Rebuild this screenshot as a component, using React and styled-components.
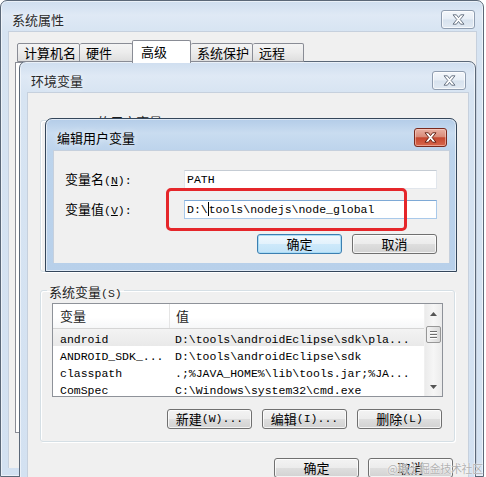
import React from "react";
import styled, { createGlobalStyle, css } from "styled-components";

const Global = createGlobalStyle`
  html, body { margin: 0; padding: 0; background: #ffffff; }
  body { font-family: "Noto Sans CJK SC", sans-serif; color: #000; }
  * { box-sizing: border-box; }
`;

const HAN_SPLIT = /([\u2E80-\u9FFF\uFF00-\uFFEF\u3000-\u303F]+)/;
const HAN_TEST = /[\u2E80-\u9FFF\uFF00-\uFFEF\u3000-\u303F]/;

const Han = styled.span`
  font-family: "Noto Sans CJK SC", sans-serif;
  font-size: 13px;
`;
const Lat = styled.span`
  font-family: "Liberation Mono", monospace;
  font-size: 11.5px;
`;
const Key = styled(Lat)`
  text-decoration: underline;
  text-underline-offset: 1px;
`;

function Txt({ children }) {
  return String(children)
    .split(HAN_SPLIT)
    .filter(Boolean)
    .map((part, i) =>
      HAN_TEST.test(part) ? <Han key={i}>{part}</Han> : <Lat key={i}>{part}</Lat>
    );
}

const Stage = styled.div`
  position: relative;
  width: 486px;
  height: 477px;
  overflow: hidden;
  background: #ffffff;
`;

const Window = styled.div`
  position: absolute;
  left: ${(p) => p.$x}px;
  top: ${(p) => p.$y}px;
  width: ${(p) => p.$w}px;
  height: ${(p) => p.$h}px;
  display: flex;
  flex-direction: column;
  border: 1px solid ${(p) => (p.$active ? "#34465a" : "#5b6878")};
  border-radius: 7px 7px 0 0;
  background: ${(p) =>
    p.$active
      ? "linear-gradient(180deg, #b3cce8 0px, #c9dcf0 14px, #bdd4ec 31px, #b8d0ea 100%)"
      : "linear-gradient(180deg, #cfdeef 0px, #dfe9f5 14px, #d7e4f2 31px, #d3e1f1 100%)"};
  box-shadow: inset 0 0 0 1px rgba(255, 255, 255, 0.55);
`;

const TitleBar = styled.div`
  height: ${(p) => p.$h || 30}px;
  flex: none;
  display: flex;
  justify-content: space-between;
  align-items: flex-start;
  padding: 9px ${(p) => p.$pr || 9}px 0 11px;
`;

const Title = styled.div`
  margin-top: 2px;
  line-height: 16px;
  font-size: 13px;
  font-family: "Noto Sans CJK SC", sans-serif;
  color: ${(p) => (p.$active ? "#000" : "#2a2a2a")};
  text-shadow: 0 0 6px rgba(255, 255, 255, 0.9);
`;

const CloseButton = styled.div`
  width: ${(p) => p.$w || 33}px;
  height: 19px;
  border-radius: 3px;
  display: flex;
  align-items: center;
  justify-content: center;
  ${(p) =>
    p.$red
      ? css`
          border: 1px solid #7a2a1e;
          background: linear-gradient(180deg, #e9b1a3 0%, #d98c7a 45%, #c5472f 52%, #d8674c 100%);
          box-shadow: inset 0 0 0 1px rgba(255, 220, 210, 0.5);
        `
      : css`
          border: 1px solid #8f9db0;
          background: linear-gradient(180deg, #f4f7fb 0%, #e7eef6 48%, #d7e2ee 52%, #e2eaf3 100%);
          box-shadow: inset 0 0 0 1px rgba(255, 255, 255, 0.7);
        `}
`;

function Close({ red, w }) {
  return (
    <CloseButton $red={red} $w={w}>
      <svg width="13" height="11" viewBox="0 0 13 11">
        <path
          d="M1 0.8 H4.4 L6.5 3.6 L8.6 0.8 H12 L8.2 5.5 L12 10.2 H8.6 L6.5 7.4 L4.4 10.2 H1 L4.8 5.5 Z"
          fill="#ffffff"
          stroke={red ? "#5a1508" : "#5d6a7a"}
          strokeWidth="0.9"
          strokeLinejoin="round"
        />
      </svg>
    </CloseButton>
  );
}

const Client = styled.div`
  position: relative;
  flex: 1;
  margin: 0 6px 8px 7px;
  background: #f0f0f0;
  border: 1px solid rgba(120, 150, 185, 0.35);
  border-bottom: none;
  display: flex;
  flex-direction: column;
  padding: ${(p) => p.$pad || "0"};
`;

const TabStrip = styled.div`
  display: flex;
  align-items: flex-end;
  height: 22px;
  margin-left: 2px;
  position: relative;
  z-index: 1;
`;

const Tab = styled.div`
  width: ${(p) => p.$w}px;
  height: ${(p) => (p.$sel ? 23 : 19)}px;
  margin-bottom: ${(p) => (p.$sel ? -1 : 0)}px;
  padding-left: ${(p) => (p.$sel ? 8 : 6)}px;
  display: flex;
  align-items: center;
  font-size: 13px;
  line-height: 16px;
  border: 1px solid #898c95;
  border-bottom: ${(p) => (p.$sel ? "none" : "1px solid #898c95")};
  border-left-width: ${(p) => (p.$first || p.$sel ? 1 : 0)}px;
  border-radius: 2px 2px 0 0;
  background: ${(p) =>
    p.$sel ? "#ffffff" : "linear-gradient(180deg, #f4f4f4 0%, #ececec 50%, #dedede 100%)"};
  ${(p) => p.$sel && "margin-left: -1px;"}
`;

const TabPanel = styled.div`
  height: 371px;
  margin-right: 7px;
  border: 1px solid #898c95;
  background: #ffffff;
`;

const EnvBody = styled.div`
  display: flex;
  flex-direction: column;
  padding: 19px 13px 0 12px;
`;

const Group = styled.fieldset`
  margin: ${(p) => (p.$mt ? `${p.$mt}px` : 0)} 0 0 0;
  padding: 5px 11px 12px 11px;
  border: 1px solid #d5dfe5;
  border-radius: 3px;
  min-width: 0;
  box-shadow: inset 1px 1px 0 #ffffff, 1px 1px 0 #ffffff;
`;

const Legend = styled.legend`
  padding: 0 2px;
  margin-left: -5px;
  height: 16px;
  line-height: 16px;
  color: #1e1e1e;
`;

const ListView = styled.div`
  height: 94px;
  display: flex;
  border: 1px solid #8e9299;
  background: #ffffff;
  overflow: hidden;
`;

const ListMain = styled.div`
  flex: 1;
  min-width: 0;
  display: flex;
  flex-direction: column;
`;

const HeaderRow = styled.div`
  height: 25px;
  flex: none;
  display: flex;
  align-items: stretch;
  background: linear-gradient(180deg, #ffffff 0%, #ffffff 55%, #f6f7f8 100%);
  border-bottom: 1px solid #d5d5d5;
`;

const HeaderCell = styled.div`
  width: ${(p) => (p.$w ? `${p.$w}px` : "auto")};
  flex: ${(p) => (p.$w ? "none" : 1)};
  display: flex;
  align-items: center;
  padding-left: ${(p) => p.$pl}px;
  line-height: 16px;
  color: #1e1e1e;
  border-right: ${(p) => (p.$w ? "1px solid #e5e5e5" : "none")};
`;

const Row = styled.div`
  height: 17px;
  flex: none;
  display: flex;
  align-items: center;
  line-height: 17px;
  white-space: nowrap;
  background: ${(p) => (p.$hl ? "linear-gradient(180deg, #f3f3f3, #e9e9e9)" : "transparent")};
`;

const Cell = styled.div`
  width: ${(p) => (p.$w ? `${p.$w}px` : "auto")};
  flex: ${(p) => (p.$w ? "none" : 1)};
  padding-left: ${(p) => p.$pl}px;
  overflow: hidden;
`;

const ScrollBar = styled.div`
  width: 18px;
  flex: none;
  display: flex;
  flex-direction: column;
  background: linear-gradient(90deg, #ebebeb 0%, #f6f6f6 50%, #ebebeb 100%);
  border-left: 1px solid #f0f0f0;
`;

const ScrollArrow = styled.div`
  height: 19px;
  flex: none;
  display: flex;
  align-items: center;
  justify-content: center;
`;

const ScrollTrack = styled.div`
  flex: 1;
  display: flex;
  flex-direction: column;
  padding: 3px 1px 0 1px;
`;

const Thumb = styled.div`
  height: 17px;
  border: 1px solid #979797;
  border-radius: 2px;
  background: linear-gradient(90deg, #f3f3f3 0%, #e6e6e6 50%, #d9d9d9 100%);
  display: flex;
  flex-direction: column;
  align-items: center;
  justify-content: center;
  gap: 2px;
`;

const Grip = styled.div`
  width: 7px;
  height: 1px;
  background: #6f6f6f;
  box-shadow: 0 1px 0 #ffffff;
`;

function Scroll() {
  return (
    <ScrollBar>
      <ScrollArrow>
        <svg width="7" height="4" viewBox="0 0 7 4">
          <path d="M0 4 L3.5 0 L7 4 Z" fill="#555" />
        </svg>
      </ScrollArrow>
      <ScrollTrack>
        <Thumb>
          <Grip />
          <Grip />
          <Grip />
        </Thumb>
      </ScrollTrack>
      <ScrollArrow>
        <svg width="7" height="4" viewBox="0 0 7 4">
          <path d="M0 0 L7 0 L3.5 4 Z" fill="#555" />
        </svg>
      </ScrollArrow>
    </ScrollBar>
  );
}

function VarList({ rows }) {
  return (
    <ListView>
      <ListMain>
        <HeaderRow>
          <HeaderCell $w={117} $pl={7}>
            <Txt>变量</Txt>
          </HeaderCell>
          <HeaderCell $pl={6}>
            <Txt>值</Txt>
          </HeaderCell>
        </HeaderRow>
        {rows.map(([name, value], i) => (
          <Row key={name} $hl={i === 0}>
            <Cell $w={117} $pl={7}>
              <Txt>{name}</Txt>
            </Cell>
            <Cell $pl={5}>
              <Txt>{value}</Txt>
            </Cell>
          </Row>
        ))}
      </ListMain>
      <Scroll />
    </ListView>
  );
}

const ButtonRow = styled.div`
  display: flex;
  justify-content: flex-end;
  gap: ${(p) => p.$gap || 10}px;
  margin-top: ${(p) => p.$mt || 0}px;
  padding-right: ${(p) => p.$pr || 0}px;
`;

const Button = styled.div`
  width: 85px;
  height: 20px;
  display: flex;
  align-items: center;
  justify-content: center;
  line-height: 18px;
  border-radius: 3px;
  white-space: nowrap;
  ${(p) =>
    p.$default
      ? css`
          border: 1px solid #3c7fb1;
          background: linear-gradient(180deg, #f0f8fd 0%, #e3f2fc 48%, #cde9fa 52%, #c2e3f8 100%);
          box-shadow: inset 0 0 0 1px #a9dcf6;
        `
      : css`
          border: 1px solid #707070;
          background: linear-gradient(180deg, #f3f3f3 0%, #ececec 48%, #dedede 52%, #d2d2d2 100%);
          box-shadow: inset 0 0 0 1px rgba(255, 255, 255, 0.75);
        `}
`;

const FieldRow = styled.div`
  display: flex;
  align-items: center;
  margin-top: ${(p) => p.$mt || 0}px;
`;

const FieldLabel = styled.div`
  width: 119px;
  flex: none;
  line-height: 16px;
  white-space: nowrap;
`;

const TextBox = styled.div`
  width: 253px;
  height: 19px;
  display: flex;
  align-items: center;
  padding-left: 2px;
  background: #ffffff;
  white-space: nowrap;
  overflow: hidden;
  border: 1px solid ${(p) => (p.$focus ? "#a9c9ea" : "#e1e6ec")};
  border-top-color: ${(p) => (p.$focus ? "#7ea9d6" : "#c5ccd4")};
`;

const BoxText = styled.span`
  font-family: "Liberation Mono", monospace;
  font-size: 11.5px;
  line-height: 15px;
`;

const Caret = styled.span`
  width: 1px;
  height: 14px;
  flex: none;
  background: #000;
`;

const Annotation = styled.div`
  position: absolute;
  left: 112px;
  top: 37px;
  width: 241px;
  height: 43px;
  border: 3px solid #e5262a;
  border-radius: 5px;
  pointer-events: none;
`;

const Watermark = styled.div`
  position: absolute;
  right: 3px;
  bottom: 2px;
  font-size: 11px;
  line-height: 14px;
  letter-spacing: -0.3px;
  color: #b2b2b2;
  text-shadow: 0 0 1px #ffffff, 0 0 2px rgba(255, 255, 255, 0.8);
  font-family: "Noto Sans CJK SC", sans-serif;
`;

const tabs = [
  { label: "计算机名", w: 63 },
  { label: "硬件", w: 53 },
  { label: "高级", w: 59, sel: true },
  { label: "系统保护", w: 62 },
  { label: "远程", w: 51 },
];

const userVars = [
  ["PATH", "D:\\tools\\nodejs\\node_global"],
  ["TEMP", "%USERPROFILE%\\AppData\\Local\\Temp"],
  ["TMP", "%USERPROFILE%\\AppData\\Local\\Temp"],
];

const sysVars = [
  ["android", "D:\\tools\\androidEclipse\\sdk\\pla..."],
  ["ANDROID_SDK_...", "D:\\tools\\androidEclipse\\sdk"],
  ["classpath", ".;%JAVA_HOME%\\lib\\tools.jar;%JA..."],
  ["ComSpec", "C:\\Windows\\system32\\cmd.exe"],
];

export default function App() {
  return (
    <Stage>
      <Global />
      <Window $x={0} $y={0} $w={484} $h={477}>
        <TitleBar $pr={8}>
          <Title>系统属性</Title>
          <Close w={34} />
        </TitleBar>
        <Client $pad="8px 0 0 6px">
          <TabStrip>
            {tabs.map((t, i) => (
              <Tab key={t.label} $w={t.w} $sel={t.sel} $first={i === 0}>
                {t.label}
              </Tab>
            ))}
          </TabStrip>
          <TabPanel />
        </Client>
      </Window>

      <Window $x={19} $y={61} $w={457} $h={430}>
        <TitleBar>
          <Title>环境变量</Title>
          <Close w={34} />
        </TitleBar>
        <Client>
          <EnvBody>
            <Group>
              <Legend>
                <Txt>Lenovo 的用户变量(</Txt>
                <Key>U</Key>
                <Txt>)</Txt>
              </Legend>
              <VarList rows={userVars} />
              <ButtonRow $mt={12} $pr={1}>
                <Button><Txt>新建(N)...</Txt></Button>
                <Button><Txt>编辑(E)...</Txt></Button>
                <Button><Txt>删除(D)</Txt></Button>
              </ButtonRow>
            </Group>
            <Group $mt={10}>
              <Legend>
                <Txt>系统变量(S)</Txt>
              </Legend>
              <VarList rows={sysVars} />
              <ButtonRow $mt={12} $pr={1}>
                <Button><Txt>新建(W)...</Txt></Button>
                <Button><Txt>编辑(I)...</Txt></Button>
                <Button><Txt>删除(L)</Txt></Button>
              </ButtonRow>
            </Group>
            <ButtonRow $mt={16} $gap={9} $pr={2}>
              <Button><Txt>确定</Txt></Button>
              <Button><Txt>取消</Txt></Button>
            </ButtonRow>
          </EnvBody>
        </Client>
      </Window>

      <Window $active $x={45} $y={118} $w={412} $h={154}>
        <TitleBar $h={31}>
          <Title $active>编辑用户变量</Title>
          <Close red w={33} />
        </TitleBar>
        <Client $pad="18px 12px 0 11px">
          <FieldRow>
            <FieldLabel>
              <Txt>变量名(</Txt>
              <Key>N</Key>
              <Txt>):</Txt>
            </FieldLabel>
            <TextBox>
              <BoxText>PATH</BoxText>
            </TextBox>
          </FieldRow>
          <FieldRow $mt={10}>
            <FieldLabel>
              <Txt>变量值(</Txt>
              <Key>V</Key>
              <Txt>):</Txt>
            </FieldLabel>
            <TextBox $focus>
              <BoxText>{"D:\\"}</BoxText>
              <Caret />
              <BoxText>{"tools\\nodejs\\node_global"}</BoxText>
            </TextBox>
          </FieldRow>
          <ButtonRow $mt={15}>
            <Button $default><Txt>确定</Txt></Button>
            <Button><Txt>取消</Txt></Button>
          </ButtonRow>
          <Annotation />
        </Client>
      </Window>

      <Watermark>@稀土掘金技术社区</Watermark>
    </Stage>
  );
}
